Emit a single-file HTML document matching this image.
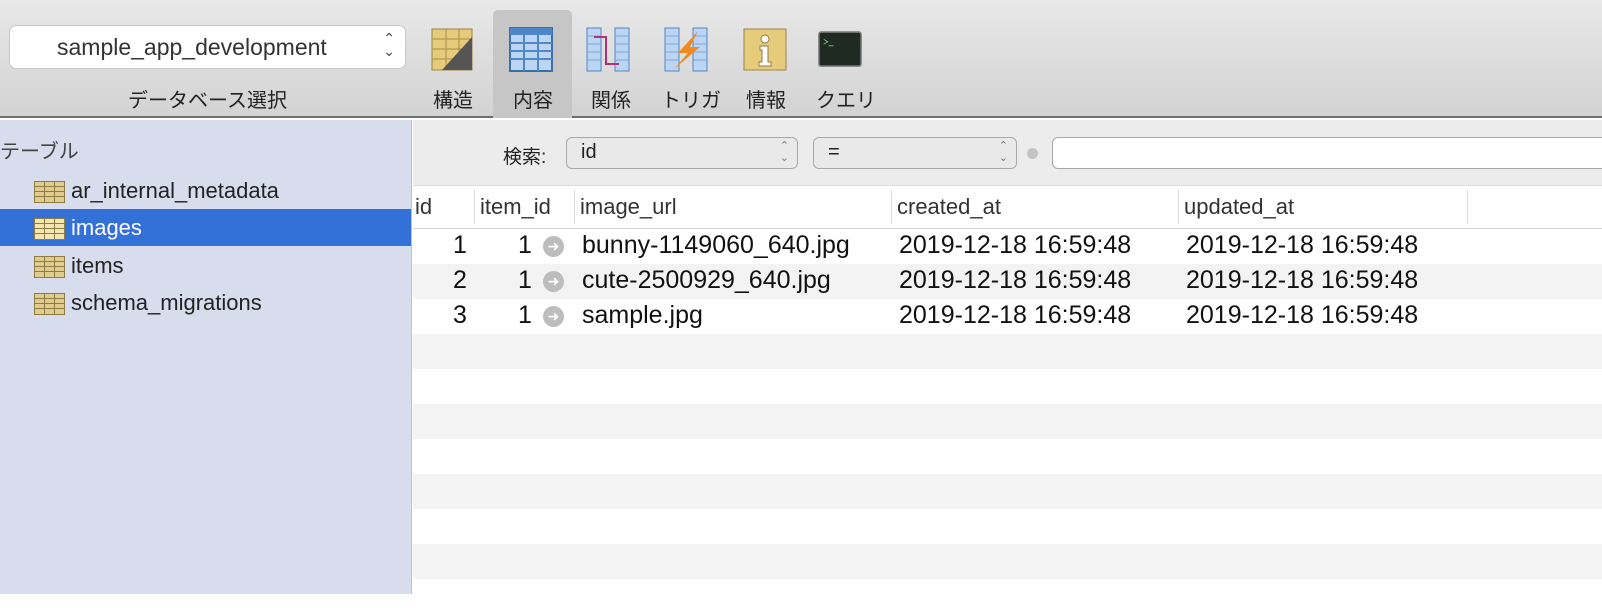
<!DOCTYPE html>
<html><head><meta charset="utf-8"><style>
*{box-sizing:border-box;margin:0;padding:0}
body{width:1602px;height:594px;overflow:hidden;font-family:"Liberation Sans","Noto Sans CJK JP",sans-serif;background:#fff;position:relative;color:#222}
.tb{position:absolute;left:0;top:0;width:1602px;height:118px;background:linear-gradient(#e8e8e8,#d3d3d3);border-bottom:2px solid #6e6e6e}
.pop{position:absolute;left:9px;top:25px;width:397px;height:44px;background:#fff;border:1px solid #c8c8c8;border-radius:7px;font-size:23px;color:#333;padding:8px 0 0 47px}
.pop .ar{position:absolute;right:10px;top:6px;font-size:14px;line-height:13px;color:#444;text-align:center}
.lbl{position:absolute;top:84px;font-size:20px;color:#222}
.sel{position:absolute;left:493px;top:10px;width:79px;height:108px;background:#c6c6c6;border-radius:5px 5px 0 0}
.ic{position:absolute;top:27px;width:44px;height:45px}
.side{position:absolute;left:0;top:120px;width:412px;height:474px;background:#d7dded;border-right:1px solid #c2c2c2}
.side .h{position:absolute;left:0;top:15px;font-size:20px;color:#444}
.it{position:absolute;left:0;width:411px;height:37px;font-size:22px;padding:6px 0 0 71px;color:#222}
.it .g{position:absolute;left:34px;top:9px;width:31px;height:22px;background:#e0cd8e;border:1px solid #8d7a45;background-image:linear-gradient(90deg,transparent 9px,#8d7a45 9px,#8d7a45 10px,transparent 10px,transparent 19px,#8d7a45 19px,#8d7a45 20px,transparent 20px),linear-gradient(transparent 4px,#8d7a45 4px,#8d7a45 5px,transparent 5px,transparent 9px,#8d7a45 9px,#8d7a45 10px,transparent 10px,transparent 14px,#8d7a45 14px,#8d7a45 15px,transparent 15px)}
.it.s{background:#3370d8;color:#fff}
.it.s .g{background-color:#f4e6b0}
.fb{position:absolute;left:413px;top:120px;width:1189px;height:66px;background:#ececec;border-bottom:1px solid #dcdcdc}
.box{position:absolute;top:17px;height:32px;border:1px solid #a9a9a9;border-radius:6px;background:#e9e9e9;font-size:20px;padding:3px 0 0 14px}
.box .ar{position:absolute;right:8px;top:2px;font-size:11px;line-height:12px;color:#777}
.hd{position:absolute;left:413px;top:186px;width:1189px;height:43px;background:#fff;border-bottom:1px solid #d6d6d6;font-size:22px;color:#333}
.hd span{position:absolute;top:8px}
.hd i{position:absolute;top:4px;width:1px;height:34px;background:#ddd}
.row{position:absolute;left:413px;width:1189px;height:35px;font-size:25px;color:#111}
.row span{position:absolute;top:2px}
.row .c{position:absolute;left:130px;top:7px;width:21px;height:21px;border-radius:50%;background:#bdbdbd;color:#fff;font-size:14px;text-align:center;line-height:21px}
.alt{background:#f3f3f3}
</style></head><body>
<div class="tb">
 <div class="pop">sample_app_development<div class="ar">⌃<br>⌄</div></div>
 <div class="lbl" style="left:128px">データベース選択</div>
 <div class="sel"></div>
 <svg class="ic" style="left:430px" viewBox="0 0 44 45"><rect x="2" y="2" width="40" height="41" fill="#e6cc7a" stroke="#9b8645"/><path d="M2 12H42M2 22H42M2 32H42M16 2V43M29 2V43" stroke="#a68c4a"/><path d="M42 10L12 43H42Z" fill="#555"/></svg>
 <svg class="ic" style="left:509px" viewBox="0 0 44 45"><rect x="1" y="1" width="42" height="43" fill="#bcd5f2" stroke="#3d6ea5" stroke-width="2"/><rect x="1" y="1" width="42" height="7" fill="#4f86c8"/><path d="M1 16H43M1 24H43M1 32H43M15 1V44M29 1V44" stroke="#4f86c8" stroke-width="2"/></svg>
 <svg class="ic" style="left:586px" viewBox="0 0 44 45"><rect x="1" y="1" width="14" height="43" fill="#bcd5f2" stroke="#4f86c8"/><rect x="29" y="1" width="14" height="43" fill="#bcd5f2" stroke="#4f86c8"/><path d="M1 9H15M1 17H15M1 25H15M1 33H15M29 9H43M29 17H43M29 25H43M29 33H43" stroke="#7aa6dc"/><path d="M8 10H20V37H33" stroke="#b0307a" stroke-width="2" fill="none"/></svg>
 <svg class="ic" style="left:664px" viewBox="0 0 44 45"><rect x="1" y="1" width="14" height="43" fill="#bcd5f2" stroke="#4f86c8"/><rect x="29" y="1" width="14" height="43" fill="#bcd5f2" stroke="#4f86c8"/><path d="M1 9H15M1 17H15M1 25H15M1 33H15M29 9H43M29 17H43M29 25H43M29 33H43" stroke="#7aa6dc"/><path d="M34 4L14 26H24L10 42L36 20H26Z" fill="#f08a1e"/></svg>
 <svg class="ic" style="left:743px" viewBox="0 0 44 45"><rect x="1" y="2" width="42" height="41" fill="#e6cc7a" stroke="#9b8645"/><circle cx="22" cy="12" r="4" fill="#fff" stroke="#8d7a45"/><path d="M17 19H25V35H28V39H16V35H19V23H17Z" fill="#fff" stroke="#8d7a45"/></svg>
 <svg class="ic" style="left:818px" viewBox="0 0 54 45" width="54"><rect x="1" y="1" width="52" height="42" rx="3" fill="#1e2a22" stroke="#888" stroke-width="2"/><path d="M7 10L12 13L7 16M13 18H19" stroke="#7dd37d" fill="none"/></svg>
 <div class="lbl" style="left:433px">構造</div>
 <div class="lbl" style="left:513px">内容</div>
 <div class="lbl" style="left:591px">関係</div>
 <div class="lbl" style="left:661px">トリガ</div>
 <div class="lbl" style="left:746px">情報</div>
 <div class="lbl" style="left:816px">クエリ</div>
</div>
<div class="side">
 <div class="h">テーブル</div>
 <div class="it" style="top:52px"><div class="g"></div>ar_internal_metadata</div>
 <div class="it s" style="top:89px"><div class="g"></div>images</div>
 <div class="it" style="top:127px"><div class="g"></div>items</div>
 <div class="it" style="top:164px"><div class="g"></div>schema_migrations</div>
</div>
<div class="fb">
 <div style="position:absolute;left:90px;top:22px;font-size:19px">検索:</div>
 <div class="box" style="left:153px;width:232px">id<div class="ar">⌃<br>⌄</div></div>
 <div class="box" style="left:400px;width:204px">=<div class="ar">⌃<br>⌄</div></div>
 <div style="position:absolute;left:614px;top:28px;width:11px;height:11px;border-radius:50%;background:#c4c4c4"></div>
 <div class="box" style="left:639px;width:560px;background:#fff"></div>
</div>
<div class="hd">
 <span style="left:2px">id</span><i style="left:61px"></i>
 <span style="left:67px">item_id</span><i style="left:161px"></i>
 <span style="left:167px">image_url</span><i style="left:478px"></i>
 <span style="left:484px">created_at</span><i style="left:765px"></i>
 <span style="left:771px">updated_at</span><i style="left:1054px"></i>
</div>
<div class="row" style="top:229px"><span style="left:40px">1</span><span style="left:105px">1</span><div class="c">➜</div><span style="left:169px">bunny-1149060_640.jpg</span><span style="left:486px">2019-12-18 16:59:48</span><span style="left:773px">2019-12-18 16:59:48</span></div>
<div class="row alt" style="top:264px"><span style="left:40px">2</span><span style="left:105px">1</span><div class="c">➜</div><span style="left:169px">cute-2500929_640.jpg</span><span style="left:486px">2019-12-18 16:59:48</span><span style="left:773px">2019-12-18 16:59:48</span></div>
<div class="row" style="top:299px"><span style="left:40px">3</span><span style="left:105px">1</span><div class="c">➜</div><span style="left:169px">sample.jpg</span><span style="left:486px">2019-12-18 16:59:48</span><span style="left:773px">2019-12-18 16:59:48</span></div>
<div class="row alt" style="top:334px"></div>
<div class="row" style="top:369px"></div>
<div class="row alt" style="top:404px"></div>
<div class="row" style="top:439px"></div>
<div class="row alt" style="top:474px"></div>
<div class="row" style="top:509px"></div>
<div class="row alt" style="top:544px"></div>
<div class="row" style="top:579px"></div>
</body></html>
